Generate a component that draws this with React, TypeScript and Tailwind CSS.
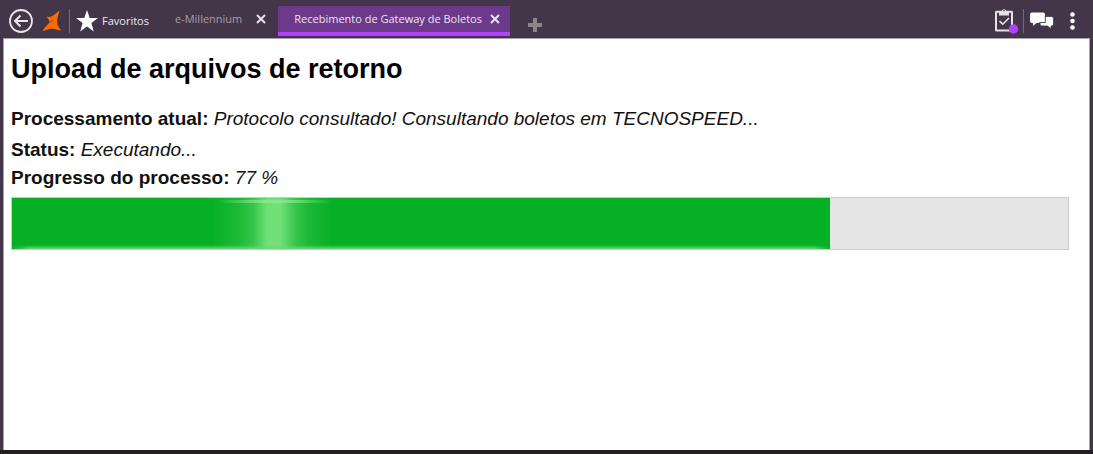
import { useState } from "react";

type Tab = { id: string; title: string };

const initialTabs: Tab[] = [
  { id: "home", title: "e-Millennium" },
  { id: "boletos", title: "Recebimento de Gateway de Boletos" },
];

const uiFont = "font-['Open_Sans','Noto_Sans',sans-serif]";

function BackIcon() {
  return (
    <svg width="24" height="24" viewBox="0 0 24 24" fill="none" stroke="#e9e5ea" aria-hidden="true">
      <circle cx="12" cy="12" r="11" strokeWidth="1.8" />
      <path d="M19 12H6M11.5 6.5L6 12l5.500 5.500" strokeWidth="2" />
    </svg>
  );
}

function BrandLogo() {
  return (
    <svg width="20" height="22" viewBox="0 0 20 22" fill="#ff6a00" aria-hidden="true">
      <path d="M17.5 0.5C16.600 4 15.200 8 15 11.500C15 15 17 18 19.200 20.600C16 20.500 12.500 18.800 9.800 18.800C6.800 18.900 3.500 20.500 0.500 21C2 18 5.500 15.200 7.300 12.600C7.800 10.200 5.800 8.400 4 6.600C6.500 7.300 8.800 7 10.800 5.800C13.200 4.300 15 2 17.500 0.500Z" />
      <path d="M6.500 13L11.500 10" stroke="#433648" strokeWidth="0.7" />
    </svg>
  );
}

function StarIcon() {
  return (
    <svg width="22" height="22" viewBox="0 0 22 22" fill="#ffffff" aria-hidden="true">
      <path d="M11 0L13.7 7.9H22L15.4 13L17.8 21.4L11 16.4L4.2 21.4L6.6 13L0 7.9H8.3Z" />
    </svg>
  );
}

function CloseIcon() {
  return (
    <svg width="10" height="10" viewBox="0 0 10 10" stroke="#e9e4ec" strokeWidth="2" aria-hidden="true">
      <path d="M1 1L9 9M9 1L1 9" />
    </svg>
  );
}

function PlusIcon() {
  return (
    <svg width="14" height="14" viewBox="0 0 14 14" fill="#8b8789" aria-hidden="true">
      <path d="M5 0h4v5h5v4H9v5H5V9H0V5h5z" />
    </svg>
  );
}

function ClipboardIcon() {
  return (
    <svg width="24" height="26" viewBox="0 0 24 26" fill="none" aria-hidden="true">
      <rect x="1" y="3.8" width="16" height="18.7" rx="0.5" stroke="#e6e2e8" strokeWidth="2" />
      <path d="M4 3h2.600a2.500 2.500 0 0 1 4.800 0H14v4.500H4z" fill="#e6e2e8" />
      <circle cx="9" cy="2.8" r="0.8" fill="#433648" />
      <path d="M4.500 13.200l3.300 3L14 10" stroke="#e6e2e8" strokeWidth="1.600" />
      <circle cx="18.5" cy="21" r="4.7" fill="#b041ff" />
    </svg>
  );
}

function ChatIcon() {
  return (
    <svg width="24" height="18" viewBox="0 0 24 18" fill="#ffffff" aria-hidden="true">
      <path d="M2 0.500h11a2 2 0 0 1 2 2v6.500a2 2 0 0 1-2 2H6.500L3 14V11H2a2 2 0 0 1-2-2V2.500a2 2 0 0 1 2-2Z" />
      <path
        d="M12 4.500h9.500a2 2 0 0 1 2 2v5.500a2 2 0 0 1-2 2H21v3L17.500 14H12a2 2 0 0 1-2-2V6.500a2 2 0 0 1 2-2Z"
        stroke="#433648"
        strokeWidth="0.8"
      />
      <path d="M9 3h6v7H9z" />
      <path d="M15.300 4v6.500H9.500" fill="none" stroke="#433648" strokeWidth="0.9" />
    </svg>
  );
}

function DotsIcon() {
  return (
    <svg width="5" height="18" viewBox="0 0 5 18" fill="#ffffff" aria-hidden="true">
      <circle cx="2.5" cy="2.5" r="2.3" />
      <circle cx="2.5" cy="9" r="2.3" />
      <circle cx="2.5" cy="15.5" r="2.3" />
    </svg>
  );
}

function ProgressBar({ value, label }: { value: number; label: string }) {
  return (
    <div
      role="progressbar"
      aria-labelledby={label}
      aria-valuenow={value}
      aria-valuemin={0}
      aria-valuemax={100}
      className="mt-[5px] h-[53px] border border-[#cacaca] bg-[#e5e5e5]"
    >
      <div className="relative h-full overflow-hidden bg-[#06b025]" style={{ width: `${value + 0.5}%` }}>
        {/* moving highlight */}
        <div className="absolute inset-y-0 left-[200px] w-[120px] bg-[linear-gradient(90deg,#06b02500_0%,#1dba35_22%,#35c54a_34%,#70e077_46%,#70e077_57%,#35c54a_70%,#1dba35_80%,#06b02500_100%)]" />
        <div className="absolute top-0.5 left-[205px] h-[3px] w-[115px] bg-[linear-gradient(90deg,#7fe58400,#86e98a,#7fe58400)]" />
        <div className="absolute inset-x-0 bottom-0 h-1 bg-linear-to-t from-[#6fd57c] to-[#6fd57c00] mask-x-from-[calc(100%-16px)]" />
      </div>
    </div>
  );
}

export default function App() {
  const [tabs, setTabs] = useState(initialTabs);
  const [active, setActive] = useState("boletos");
  const progress = 77;

  const closeTab = (id: string) => setTabs(tabs.filter((t) => t.id !== id));

  return (
    <div className="flex min-h-screen flex-col border-b-4 border-[#231f20] bg-[#433648]">
      <header className={`flex h-[38px] items-start justify-between pr-[18px] pl-[9px] text-[11px] ${uiFont}`}>
        <div className="flex items-start">
          <div className="flex h-[38px] items-center pt-1">
            <button type="button" aria-label="Voltar">
              <BackIcon />
            </button>
            <a href="#inicio" aria-label="Início" className="ml-[9px]">
              <BrandLogo />
            </a>
            <span className="ml-[7px] h-6 w-px bg-[#74697a]" />
            <button type="button" className="ml-1.5 flex items-center gap-1 text-[#eeeaf0]">
              <StarIcon />
              Favoritos
            </button>
          </div>
          <nav className="ml-3.5 flex pt-1.5">
            {tabs.map((tab) => (
              <div
                key={tab.id}
                className={
                  tab.id === active
                    ? "flex h-[30px] items-center border-b-4 border-[#b041ff] bg-[#6d3a8b] pr-2.5 pl-4 text-[#ece3f2]"
                    : "flex h-[30px] items-center border-b-4 border-transparent px-3 text-[#a59da9]"
                }
              >
                <button type="button" onClick={() => setActive(tab.id)}>
                  {tab.title}
                </button>
                <button
                  type="button"
                  aria-label={`Fechar ${tab.title}`}
                  className={tab.id === active ? "ml-2" : "ml-3.5"}
                  onClick={() => closeTab(tab.id)}
                >
                  <CloseIcon />
                </button>
              </div>
            ))}
          </nav>
          <button
            type="button"
            aria-label="Nova aba"
            className="mt-[18px] ml-[18px]"
            onClick={() => setTabs([...tabs, { id: `tab-${tabs.length}`, title: "Nova aba" }])}
          >
            <PlusIcon />
          </button>
        </div>

        <div className="flex h-[38px] items-center pt-1">
          <button type="button" aria-label="Tarefas">
            <ClipboardIcon />
          </button>
          <span className="ml-1 h-6 w-px bg-[#74697a]" />
          <button type="button" aria-label="Mensagens" className="ml-1.5">
            <ChatIcon />
          </button>
          <button type="button" aria-label="Mais opções" className="ml-4">
            <DotsIcon />
          </button>
        </div>
      </header>

      <main className="mx-[3px] flex-1 border border-b-0 border-[#a9a2ab] bg-white pr-5 pl-[7px] font-['Liberation_Sans',Arial,sans-serif] text-[19px] text-[#111111]">
        <h1 className="mt-3 text-[27px] leading-9 font-bold text-black">Upload de arquivos de retorno</h1>
        <p className="mt-[18px] leading-7">
          <b>Processamento atual:</b> <i>Protocolo consultado! Consultando boletos em TECNOSPEED...</i>
        </p>
        <p className="mt-[3px] leading-7">
          <b>Status:</b> <i>Executando...</i>
        </p>
        <p className="leading-7">
          <b id="progress-label">Progresso do processo:</b> <i>{progress} %</i>
        </p>
        <ProgressBar value={progress} label="progress-label" />
      </main>
    </div>
  );
}
